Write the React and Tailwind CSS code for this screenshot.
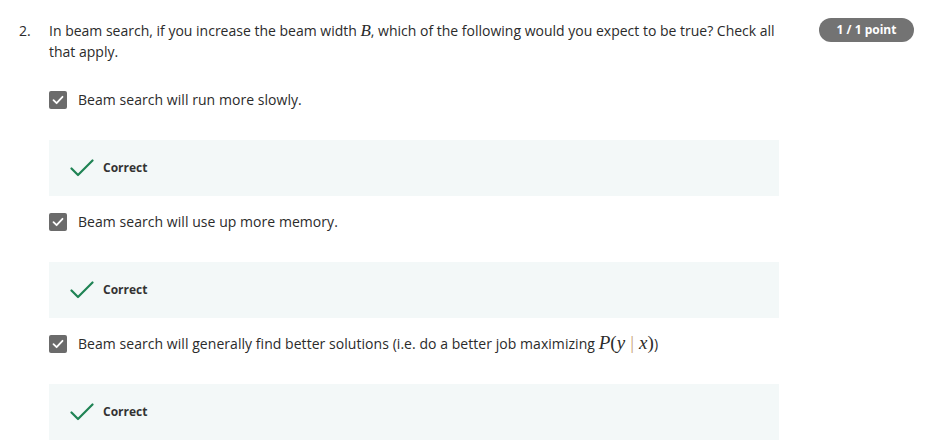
import React from 'react';

const options = [
    { id: 1, text: 'Beam search will run more slowly.' },
    { id: 2, text: 'Beam search will use up more memory.' },
    { id: 3, text: 'Beam search will generally find better solutions (i.e. do a better job maximizing', math: true },
];

function CheckBox() {
    return (
        <span className="flex items-center justify-center w-[18px] h-[18px] rounded-[2px] bg-[#6b6b6b] shrink-0">
            <svg width="12" height="10" viewBox="0 0 12 10" fill="none">
                <path d="M1.5 5.2 L4.6 8.2 L10.5 1.8" stroke="#fff" strokeWidth="1.8" strokeLinecap="round" strokeLinejoin="round" />
            </svg>
        </span>
    );
}

function CorrectPanel() {
    return (
        <div className="mt-[28px] h-[56px] bg-[#f3f8f8] flex items-center pl-[21px]">
            <svg width="24" height="18" viewBox="0 0 24 18" fill="none">
                <path d="M1.5 9.5 L8 16 L22.5 1.5" stroke="#1f8354" strokeWidth="2.2" strokeLinecap="round" strokeLinejoin="round" />
            </svg>
            <span className="ml-[9px] text-[12px] font-bold text-[#333]">Correct</span>
        </div>
    );
}

export default function App() {
    return (
        <div className="w-[938px] h-[444px] bg-white overflow-hidden text-[#2b2b2b]" style={{ fontFamily: '"Open Sans", sans-serif' }}>
            <div className="flex pt-[20px] pl-[19px]">
                <div className="w-[30px] text-[14px] leading-[21px]">2.</div>
                <div className="w-[730px]">
                    <p className="text-[14px] leading-[21px] w-[735px]">
                        In beam search, if you increase the beam width{' '}
                        <span className="italic text-[17px] leading-[14px]" style={{ fontFamily: '"Liberation Serif", serif' }}>B</span>, which of the following would you expect to be true? Check all that apply.
                    </p>

                    <div className="mt-[26px] flex flex-col gap-[14px]">
                        {options.map((o) => (
                            <div key={o.id}>
                                <div className="h-[24px] flex items-center gap-[11px] text-[14px]">
                                    <CheckBox />
                                    <span className="-mt-[2px] tracking-[0.05px]">
                                        {o.text}
                                        {o.math && (
                                            <>
                                                {' '}
                                                <span className="text-[19px] leading-[14px]" style={{ fontFamily: '"Liberation Serif", serif' }}>
                                                    <i>P</i>(<i>y</i>
                                                    <span className="text-[#c8a27a] px-[5px]">|</span>
                                                    <i>x</i>)
                                                </span>
                                                )
                                            </>
                                        )}
                                    </span>
                                </div>
                                <CorrectPanel />
                            </div>
                        ))}
                    </div>
                </div>
                <div className="ml-[40px]">
                    <span className="flex items-center justify-center w-[95px] h-[24px] rounded-full bg-[#737373] text-white text-[12px] font-bold -mt-[2px]">
                        1 / 1 point
                    </span>
                </div>
            </div>
        </div>
    );
}
